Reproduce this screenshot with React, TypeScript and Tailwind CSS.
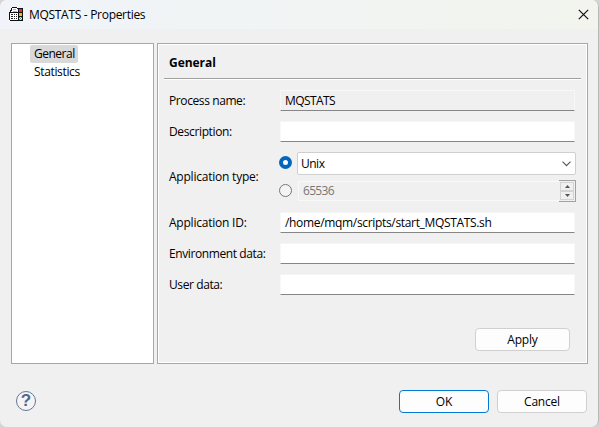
import type { ReactNode } from "react";

function AppIcon() {
  return (
    <svg width="16" height="16" viewBox="0 0 16 16" shapeRendering="crispEdges">
      <path d="M4 1h6v2h1v3h1v9H1V6h1V4h2z" fill="#fff" />
      <path d="M4 1h5v1H4zM3 2h1v3H3zM9 2h1v1H9zM2 4h1v2H2zM1 6h1v8H1zM2 14h9v1H2zM2 6h8v1H2z" fill="#111" />
      <path d="M5 3h3v1H5zM5 5h4v1H5z" fill="#b5b5b5" />
      <path d="M3 8h2v1H3zM6 8h1v1H6zM8 8h1v1H8zM3 10h2v1H3zM6 10h1v1H6zM8 10h1v1H8zM3 12h2v1H3zM6 12h1v1H6zM8 12h1v1H8z" fill="#222" />
      <path d="M10 2h5v13h-5z" fill="#111" />
      <path d="M11 3h3v3h-3z" fill="#e8274b" />
      <path d="M11 7h3v3h-3z" fill="#f5b51b" />
      <path d="M11 11h3v3h-3z" fill="#2fa87a" />
      <path d="M12 11h1v1h-1zM11 12h1v1h-1zM13 12h1v1h-1zM12 13h1v1h-1z" fill="#d9f5df" />
    </svg>
  );
}

function Label({ children, className }: { children: ReactNode; className: string }) {
  return <div className={`shrink-0 whitespace-nowrap ${className}`}>{children}</div>;
}

function Field({ value = "", readOnly = false, className = "" }: { value?: string; readOnly?: boolean; className?: string }) {
  return (
    <div
      className={`flex h-[21px] w-[295px] items-center whitespace-nowrap rounded-[1px] border border-b-[#868686] pl-[4px] ${className} ${
        readOnly ? "border-x-[#f7f7f7] border-t-[#f8f8f8] bg-[#f0f0f0]" : "border-x-[#f8f8f8] border-t-[#f5f5f5] bg-white"
      }`}
    >
      {value}
    </div>
  );
}

export default function App() {
  return (
    <div className="h-[427px] w-[600px] overflow-hidden bg-[#d5d5d5] font-['Open_Sans','Noto_Sans',sans-serif] text-[12px] leading-4 text-black">
      <div className="flex h-[427px] w-[599px] flex-col overflow-hidden rounded-[7px] border-r border-[#b8b8b8] bg-[#f0f0f0]">
        <header className="flex h-[29px] shrink-0 items-center bg-linear-to-r from-[#f0f4f9] to-[#f3f4ee] pl-2">
          <div className="mb-[2px]">
            <AppIcon />
          </div>
          <span className="ml-[5px] whitespace-nowrap tracking-[-0.3px]">MQSTATS - Properties</span>
          <svg className="mr-[9px] ml-auto" width="11" height="11" viewBox="0 0 11 11">
            <path d="M.8.8l9.4 9.4M10.2.8L.8 10.2" stroke="#111" strokeWidth="1.2" />
          </svg>
        </header>

        <main className="mt-[14px] ml-[11px] flex h-[321px] shrink-0 gap-[3px]">
          <nav className="flex w-[143px] flex-col items-start border border-[#a5a7aa] bg-white pt-px pl-[18px]">
            <div className="flex h-[18px] w-[48px] items-center rounded-[2px] bg-[#d9d9d9] px-1 tracking-[-0.5px]">General</div>
            <div className="flex h-[18px] items-center px-1 tracking-[-0.35px]">Statistics</div>
          </nav>

          <section className="w-[431px] border border-[#a5a7aa]">
            <div className="flex h-full flex-col border border-white">
              <h1 className="ml-[10px] flex h-[33px] items-center pt-[2px] font-bold tracking-[-0.05px]">General</h1>
              <div className="mx-[5px] h-[2px] shrink-0 border-t border-[#a0a0a0] bg-white" />
              <div className="ml-[10px] flex flex-col gap-[10px] pt-[10px]">
                <div className="flex items-center">
                  <Label className="w-[111px] tracking-[-0.4px]">Process name:</Label>
                  <Field value="MQSTATS" readOnly className="tracking-[-0.6px]" />
                </div>
                <div className="flex items-center">
                  <Label className="w-[111px] tracking-[-0.37px]">Description:</Label>
                  <Field />
                </div>
                <div className="flex h-[50px] items-center">
                  <Label className="w-[110px] tracking-[-0.22px]">Application type:</Label>
                  <div className="flex w-[297px] flex-col gap-[5px]">
                    <div className="flex h-[23px] items-center">
                      <div className="mb-[2px] size-[13px] rounded-full border-4 border-[#0067c0] bg-white" />
                      <div className="ml-[5px] flex h-[23px] flex-1 items-center justify-between rounded-[2px] border border-[#cfcfcf] bg-white pr-[4px] pl-[3px]">
                        <span className="tracking-[-0.5px]">Unix</span>
                        <svg width="9" height="6" viewBox="0 0 9 6" fill="none">
                          <path d="M.5.7l4 4 4-4" stroke="#555" strokeWidth="1.1" />
                        </svg>
                      </div>
                    </div>
                    <div className="flex h-[22px] items-center">
                      <div className="mb-[1px] size-[13px] rounded-full border border-[#777] bg-[#f4f4f4]" />
                      <div className="ml-[6px] flex h-[20px] flex-1 items-center border border-r-0 border-[#f8f8f8] pl-[4px] tracking-[-0.7px] text-[#777]">
                        65536
                      </div>
                      <div className="flex h-[22px] w-[17px] flex-col border border-l-0 border-[#a0a2a5] p-px">
                        <div className="flex flex-1 items-center justify-center border border-[#d3d3d3]">
                          <svg width="5" height="3"><path d="M0 3L2.5 0L5 3z" fill="#555" /></svg>
                        </div>
                        <div className="flex flex-1 items-center justify-center border border-[#d3d3d3]">
                          <svg width="5" height="3"><path d="M0 0h5L2.5 3z" fill="#555" /></svg>
                        </div>
                      </div>
                    </div>
                  </div>
                </div>
                <div className="flex items-center">
                  <Label className="w-[111px] tracking-[-0.22px]">Application ID:</Label>
                  <Field value="/home/mqm/scripts/start_MQSTATS.sh" className="tracking-[-0.33px]" />
                </div>
                <div className="flex items-center">
                  <Label className="w-[111px] tracking-[-0.4px]">Environment data:</Label>
                  <Field />
                </div>
                <div className="flex items-center">
                  <Label className="w-[111px] tracking-[-0.4px]">User data:</Label>
                  <Field />
                </div>
              </div>
              <button className="mt-auto mr-[16px] mb-[11px] h-[23px] w-[95px] self-end rounded-[4px] border border-[#d0d0d0] bg-[#fdfdfd] tracking-[-0.2px]">
                Apply
              </button>
            </div>
          </section>
        </main>

        <footer className="mt-[26px] flex items-center pr-[11px] pl-[16px]">
          <div className="mb-[2px] flex size-5 items-center justify-center rounded-full border border-[#667795] bg-[#f4f4f5] font-['Liberation_Sans',sans-serif] text-[17px] leading-none font-bold text-[#53658a]">
            ?
          </div>
          <div className="ml-auto flex gap-2">
            <button className="h-[23px] w-[90px] rounded-[4px] border border-[#0078d4] bg-[#fdfdfd] tracking-[-0.2px]">OK</button>
            <button className="h-[23px] w-[90px] rounded-[4px] border border-[#d0d0d0] bg-[#fdfdfd] tracking-[-0.2px]">Cancel</button>
          </div>
        </footer>
      </div>
    </div>
  );
}
